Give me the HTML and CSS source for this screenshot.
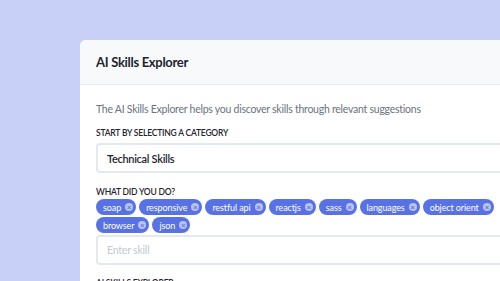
FILE: index.html
```html
<!DOCTYPE html>
<html>
<head>
<meta charset="utf-8">
<link rel="stylesheet" href="styles.css">
</head>
<body>
<div class="card">
  <div class="card-header"><h1 class="title">AI Skills Explorer</h1></div>
  <div class="card-body">
    <p class="desc">The AI Skills Explorer helps you discover skills through relevant suggestions</p>
    <div class="label">START BY SELECTING A CATEGORY</div>
    <div class="field select">Technical Skills</div>
    <div class="label label-tags">WHAT DID YOU DO?</div>
    <div class="tags">
      <span class="tag">soap<span class="x">×</span></span>
      <span class="tag">responsive<span class="x">×</span></span>
      <span class="tag">restful api<span class="x">×</span></span>
      <span class="tag">reactjs<span class="x">×</span></span>
      <span class="tag">sass<span class="x">×</span></span>
      <span class="tag">languages<span class="x">×</span></span>
      <span class="tag">object orient<span class="x">×</span></span>
      <span class="tag">browser<span class="x">×</span></span>
      <span class="tag">json<span class="x">×</span></span>
    </div>
    <div class="field input">Enter skill</div>
    <div class="label">AI SKILLS EXPLORER</div>
  </div>
</div>
</body>
</html>
```

FILE: styles.css
```css
html, body { margin: 0; padding: 0; }
body {
  background: #c8d0f8;
  width: 500px;
  height: 281px;
  overflow: hidden;
  font-family: Lato, "Noto Sans", sans-serif;
}
.card {
  margin: 40px 0 0 80px;
  width: 470px;
  background: #ffffff;
  border-radius: 6px 0 0 0;
  overflow: hidden;
}
.card-header {
  background: #f8f9fb;
  height: 44px;
  border-bottom: 1px solid #e6e9ef;
  display: flex;
  align-items: center;
  padding-left: 16px;
}
.title {
  margin: 0;
  font-size: 13px;
  letter-spacing: -0.3px;
  font-weight: 700;
  color: #1f2430;
}
.card-body {
  padding: 17px 16px 0 16px;
}
.desc {
  margin: 0 0 10px 0;
  font-size: 10.5px;
  letter-spacing: -0.25px;
  line-height: 15px;
  color: #6b7280;
}
.label {
  font-size: 8.5px;
  letter-spacing: -0.2px;
  line-height: 12px;
  font-weight: 600;
  color: #1f2430;
  margin-bottom: 4px;
}
.label-tags {
  margin-bottom: 1px;
}
.field {
  height: 26px;
  border: 2px solid #e4e9f1;
  border-radius: 4px;
  display: flex;
  align-items: center;
  padding-left: 9px;
}
.select {
  font-size: 11px;
  letter-spacing: -0.3px;
  font-weight: 600;
  color: #1f2430;
  margin-bottom: 13px;
}
.input {
  font-size: 10.5px;
  letter-spacing: -0.2px;
  color: #c3c8d1;
  margin-bottom: 12px;
}
.tags {
  display: flex;
  flex-wrap: wrap;
  gap: 2px 3px;
  width: 425px;
  margin-bottom: 2px;
}
.tag {
  display: inline-flex;
  align-items: center;
  height: 16px;
  padding: 0 3px 0 7px;
  border-radius: 8px;
  background: #5872e5;
  color: #ffffff;
  font-size: 9px;
  letter-spacing: -0.1px;
  white-space: nowrap;
}
.x {
  display: inline-flex;
  align-items: center;
  justify-content: center;
  width: 8px;
  height: 8px;
  margin-left: 4px;
  border-radius: 50%;
  background: #b9c4f4;
  color: #5872e5;
  font-size: 8px;
  line-height: 8px;
  font-weight: 700;
  letter-spacing: 0;
}
```
